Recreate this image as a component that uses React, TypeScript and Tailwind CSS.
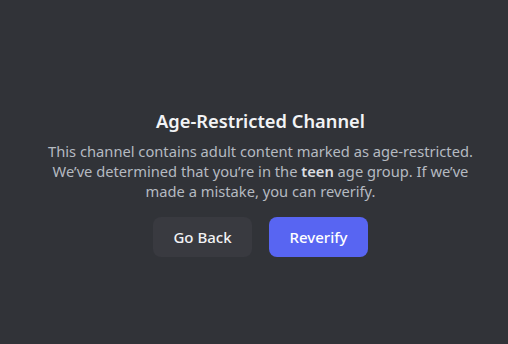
export default function App() {
  return (
    <div
      className="w-[508px] h-[344px] bg-[#313338] flex flex-col items-center pt-[109px] pl-[13px]"
      style={{ fontFamily: '"Noto Sans", "Open Sans", sans-serif' }}
    >
      <h1 className="text-[18.3px] leading-[24px] font-semibold text-[#f2f3f5]">Age-Restricted Channel</h1>
      <p className="mt-[8px] text-[14.7px] leading-[20px] text-[#b5bac1] text-center">
        This channel contains adult content marked as age-restricted.
        <br />
        We’ve determined that you’re in the <span className="font-semibold text-[#dbdee1]">teen</span> age group. If we’ve
        <br />
        made a mistake, you can reverify.
      </p>
      <div className="mt-[16px] flex gap-[17px]">
        <button className="w-[99px] h-[40px] rounded-[8px] bg-[#393a40] text-[#f2f3f5] text-[15px] font-medium">
          Go Back
        </button>
        <button className="w-[99px] h-[40px] rounded-[8px] bg-[#5865f2] text-white text-[15px] font-medium">
          Reverify
        </button>
      </div>
    </div>
  );
}
